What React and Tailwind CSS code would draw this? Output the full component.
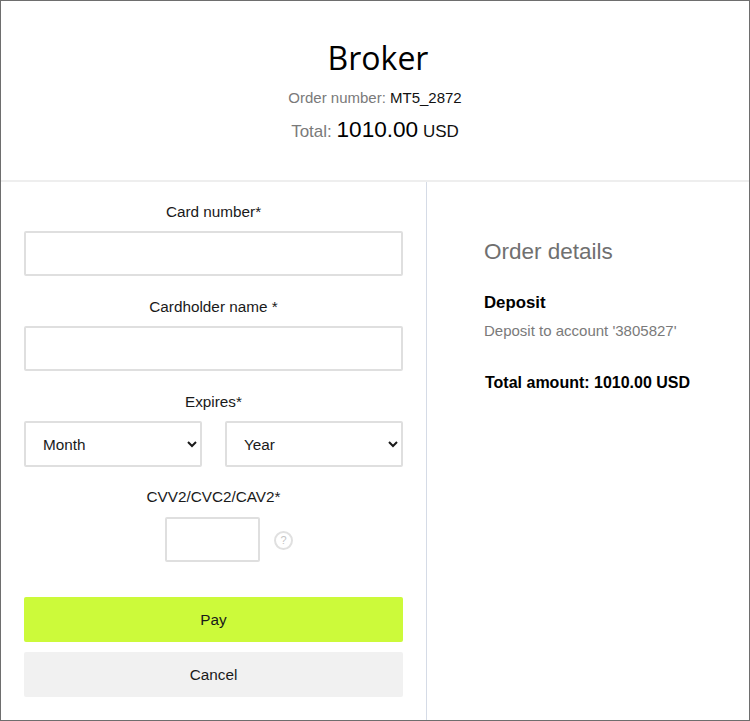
import React from "react";

function Field({ label, children }) {
  return (
    <div className="mb-[22px]">
      <p className="text-center text-[15.3px] leading-[18px] text-[#1a1a1a] mb-[10px]">{label}</p>
      {children}
    </div>
  );
}

const inputCls = "block h-[45px] w-full border-2 border-[#dfdfdf] rounded-[2px] bg-white";
const selectCls = "block h-[46px] w-[178px] border-2 border-[#dfdfdf] rounded-[2px] bg-white pl-[13px] text-[15.3px] text-[#1a1a1a] outline-none";

export default function App() {
  return (
    <div className="w-[750px] h-[721px] border border-[#6e6e6e] bg-white flex flex-col font-['Liberation_Sans',Arial,sans-serif] overflow-hidden">
      <header className="h-[181px] shrink-0 border-b-2 border-[#eeeeee] flex flex-col items-center pt-[35px]">
        <h1 className="font-['Open_Sans',sans-serif] text-[32px] leading-[44px] text-black pl-[6px]">Broker</h1>
        <p className="mt-[9px] text-[15px] leading-[18px] text-[#7a7a7a]">
          Order number: <span className="text-[#111111]">MT5_2872</span>
        </p>
        <p className="mt-[10px] text-[17px] leading-[26px] text-[#7a7a7a]">
          Total: <span className="text-[22.6px] text-black">1010.00</span>{" "}
          <span className="text-[#111111]">USD</span>
        </p>
      </header>

      <div className="flex flex-1">
        <section className="w-[426px] shrink-0 border-r border-[#d5dbe6] pl-[23px] pr-[23px] pt-[21px]">
          <Field label="Card number*">
            <input className={inputCls} />
          </Field>
          <Field label="Cardholder name *">
            <input className={inputCls} />
          </Field>
          <div className="mb-[21px]">
            <p className="text-center text-[15.3px] leading-[18px] text-[#1a1a1a] mb-[10px]">Expires*</p>
            <div className="flex justify-between">
              <select className={selectCls} defaultValue="Month">
                <option>Month</option>
              </select>
              <select className={selectCls} defaultValue="Year">
                <option>Year</option>
              </select>
            </div>
          </div>
          <p className="text-center text-[15.3px] leading-[18px] text-[#1a1a1a] mb-[11px]">CVV2/CVC2/CAV2*</p>
          <div className="relative flex justify-center">
            <input className="block h-[45px] w-[95px] mr-[3px] border-2 border-[#dfdfdf] rounded-[2px] bg-white" />
            <span className="absolute left-[250px] top-[14px] w-[19px] h-[19px] rounded-full border-2 border-[#e0e0e0] flex items-center justify-center text-[11px] leading-none text-[#c4c4c4]">
              ?
            </span>
          </div>
          <button className="block mt-[35px] pt-px h-[45px] w-full rounded-[2px] bg-[#ccfa3a] text-[15.3px] text-[#1a1a1a]">Pay</button>
          <button className="block mt-[10px] pt-px h-[45px] w-full rounded-[2px] bg-[#f1f1f1] text-[15.3px] text-[#1a1a1a]">Cancel</button>
        </section>

        <aside className="flex-1 pl-[57px] pt-[56px]">
          <h2 className="text-[22.5px] leading-[28px] text-[#707070]">Order details</h2>
          <p className="mt-[27px] text-[16.8px] leading-[20px] font-bold text-black">Deposit</p>
          <p className="mt-[8px] text-[15px] leading-[20px] text-[#7a7a7a]">Deposit to account '3805827'</p>
          <p className="mt-[32px] pl-[1px] text-[16px] leading-[20px] font-bold text-black">Total amount: 1010.00 USD</p>
        </aside>
      </div>
    </div>
  );
}
